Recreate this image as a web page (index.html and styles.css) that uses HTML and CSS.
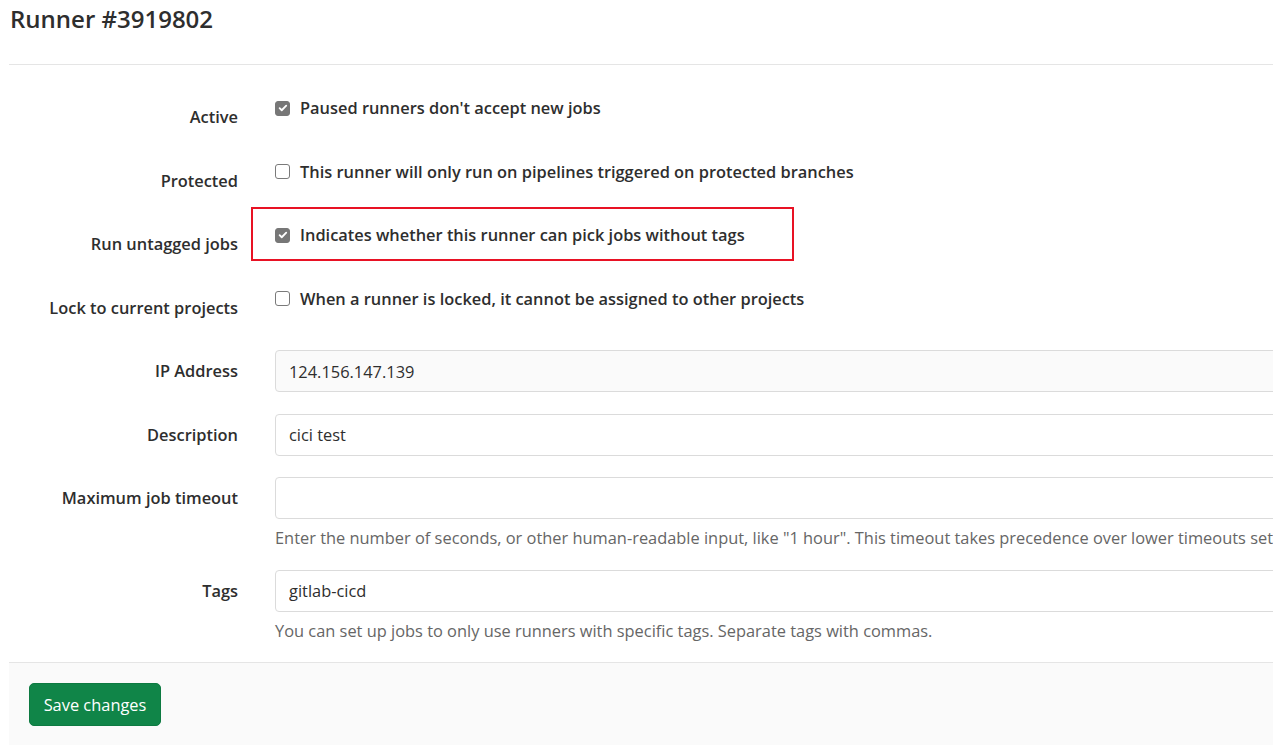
FILE: index.html
```html
<!DOCTYPE html>
<html>
<head>
<meta charset="utf-8">
<link rel="stylesheet" href="styles.css">
</head>
<body>
<div class="page">
  <h2 class="title">Runner #3919802</h2>
  <hr class="sep">
  <form class="form">
    <div class="row">
      <label class="label">Active</label>
      <div class="check">
        <span class="box checked"><svg viewBox="0 0 16 16" width="12" height="12"><path d="M3.5 8.2l2.8 2.8 6-6.2" fill="none" stroke="#fff" stroke-width="2.4" stroke-linecap="round" stroke-linejoin="round"/></svg></span>
        <span class="check-text">Paused runners don't accept new jobs</span>
      </div>
    </div>
    <div class="row">
      <label class="label">Protected</label>
      <div class="check">
        <span class="box"></span>
        <span class="check-text">This runner will only run on pipelines triggered on protected branches</span>
      </div>
    </div>
    <div class="row">
      <label class="label">Run untagged jobs</label>
      <div class="check">
        <span class="box checked"><svg viewBox="0 0 16 16" width="12" height="12"><path d="M3.5 8.2l2.8 2.8 6-6.2" fill="none" stroke="#fff" stroke-width="2.4" stroke-linecap="round" stroke-linejoin="round"/></svg></span>
        <span class="check-text">Indicates whether this runner can pick jobs without tags</span>
      </div>
      <div class="highlight"></div>
    </div>
    <div class="row">
      <label class="label">Lock to current projects</label>
      <div class="check">
        <span class="box"></span>
        <span class="check-text">When a runner is locked, it cannot be assigned to other projects</span>
      </div>
    </div>
    <div class="row">
      <label class="label">IP Address</label>
      <div class="field"><input class="input readonly" type="text" value="124.156.147.139" readonly></div>
    </div>
    <div class="row">
      <label class="label">Description</label>
      <div class="field"><input class="input" type="text" value="cici test"></div>
    </div>
    <div class="row">
      <label class="label">Maximum job timeout</label>
      <div class="field">
        <input class="input" type="text" value="">
        <p class="help">Enter the number of seconds, or other human-readable input, like "1 hour". This timeout takes precedence over lower timeouts set for the project.</p>
      </div>
    </div>
    <div class="row">
      <label class="label">Tags</label>
      <div class="field">
        <input class="input" type="text" value="gitlab-cicd">
        <p class="help">You can set up jobs to only use runners with specific tags. Separate tags with commas.</p>
      </div>
    </div>
    <div class="actions">
      <button type="button" class="btn">Save changes</button>
    </div>
  </form>
</div>
</body>
</html>
```

FILE: styles.css
```css
html, body {
  margin: 0;
  padding: 0;
  background: #fff;
  overflow: hidden;
  height: 745px;
}
body {
  font-family: "Open Sans", "Noto Sans", sans-serif;
  font-size: 16.4px;
  color: #2e2e2e;
}
.page {
  width: 1500px;
  padding-left: 9px;
}
.title {
  margin: 0;
  font-size: 24px;
  font-weight: 600;
  line-height: 38px;
  color: #2e2e2e;
  padding-left: 1px;
}
.sep {
  margin: 26px 0 0 0;
  border: 0;
  border-top: 1px solid #e5e5e5;
  height: 0;
}
.form {
  margin-top: 31px;
}
.row {
  display: grid;
  grid-template-columns: 266px 1fr;
  margin-bottom: 21.5px;
  position: relative;
}
.label {
  text-align: right;
  padding-right: 37px;
  line-height: 42px;
  font-weight: 600;
  white-space: nowrap;
}
.check {
  display: flex;
  align-items: center;
  gap: 10px;
  height: 24px;
  padding-left: 0;
}
.check-text {
  font-weight: 600;
  line-height: 24px;
  white-space: nowrap;
}
.box {
  width: 15px;
  height: 15px;
  box-sizing: border-box;
  border: 1px solid #7a7a7a;
  border-radius: 3px;
  background: #fff;
  display: flex;
  align-items: center;
  justify-content: center;
  flex: none;
}
.box.checked {
  background: #777;
  border-color: #777;
}
.field {
  display: flex;
  flex-direction: column;
}
.input {
  box-sizing: border-box;
  height: 42px;
  width: 100%;
  border: 1px solid #dbdbdb;
  border-radius: 4px;
  padding: 0 13px;
  font-family: inherit;
  font-size: 16.4px;
  color: #2e2e2e;
  background: #fff;
  outline: none;
}
.input.readonly {
  background: #fafafa;
}
.help {
  margin: 9px 0 0 0;
  line-height: 20px;
  color: #666;
  white-space: nowrap;
}
.highlight {
  position: absolute;
  left: 242px;
  top: -16px;
  width: 543px;
  height: 54px;
  box-sizing: border-box;
  border: 2px solid #e81224;
  pointer-events: none;
}
.actions {
  border-top: 1px solid #e5e5e5;
  background: #fafafa;
  padding: 20px;
  height: 200px;
  margin-top: 3.5px;
}
.btn {
  width: 132px;
  height: 43px;
  background: #108548;
  color: #fff;
  border: 1px solid #0d7a41;
  border-radius: 5px;
  font-family: inherit;
  font-size: 16.4px;
  padding: 0;
}
```
